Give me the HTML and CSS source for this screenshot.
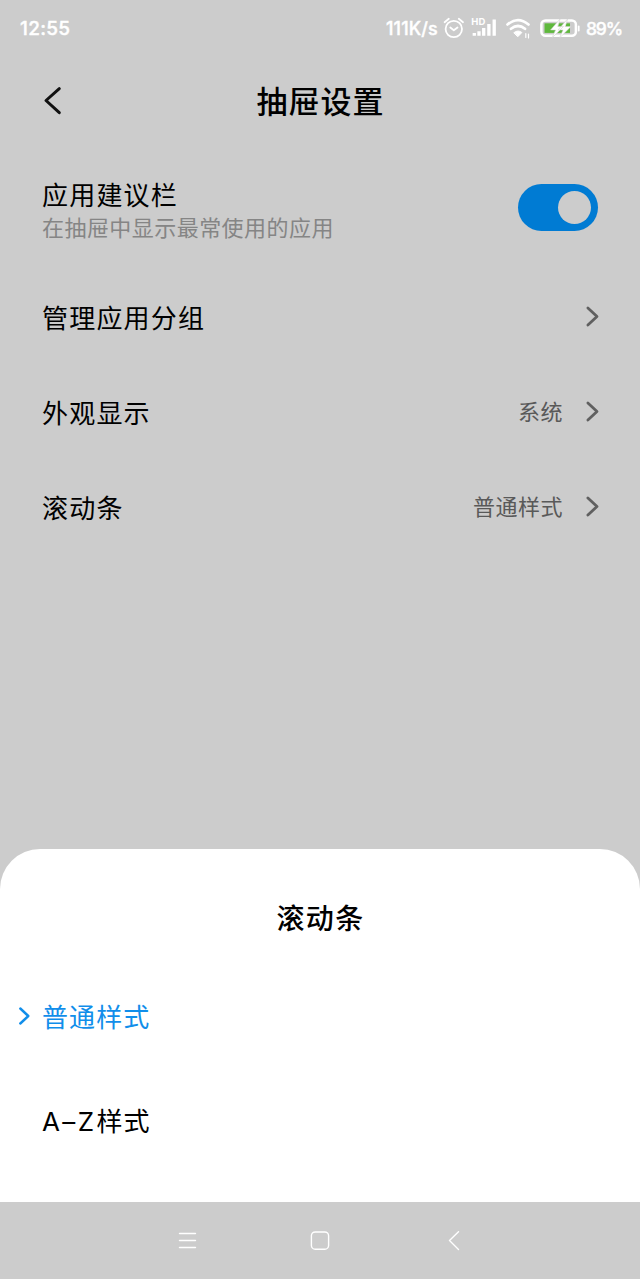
FILE: index.html
```html
<!DOCTYPE html>
<html lang="zh-CN">
<head>
<meta charset="utf-8">
<title>抽屉设置</title>
<link rel="stylesheet" href="styles.css">
</head>
<body>
<div class="screen">
  <div class="status">
    <span class="clock">12:55</span>
    <span class="speed">111K/s</span>
    <svg class="status-icons" width="140" height="30" viewBox="440 13 140 30" fill="none" stroke="#fff" stroke-linecap="round" stroke-linejoin="round">
      <circle cx="453.8" cy="29" r="8.2" stroke-width="1.8"/>
      <path d="M450.3 27.5l3.5 2.8 3.7-2.8M444.6 22.2l4.2-3.4M463 22.2l-4.2-3.4" stroke-width="1.8"/>
      <text class="hd" x="471.3" y="24.8">HD</text>
      <path d="M474.3 33v2.8M479 31.2v4.6M483.7 28v7.8M488.9 24v11.8M494.2 19.5v16.3" stroke-width="3.3" stroke-linecap="butt"/>
      <path d="M507.5 24.5q10.5-8.8 21 0M511 28.8q7-5.6 14 0" stroke-width="2.7"/>
      <path d="M514.1 32.5q3.9-3 7.8 0l-3.9 4z" fill="#fff" stroke-width="1"/>
      <path d="M525.8 33.5v4M528.5 34v4" stroke-width="1.2"/>
      <rect x="541.4" y="20.4" width="34.5" height="15.4" rx="4" stroke-width="2.5"/>
      <path d="M544.5 23.3h25.5v9.6h-25.5z" fill="#5eb83c" stroke="none"/>
      <path d="M560 19l-9.5 11h5l-3.5 8 11.5-11.5h-5.5zM567.5 19l-9.5 11h5l-3.5 8 11.5-11.5h-5.5z" fill="#fff" stroke="#ccc" stroke-width=".5"/>
      <path d="M578.7 26.5v4" stroke-width="1.8"/>
    </svg>
    <span class="percent">89%</span>
  </div>
  <header class="header">
    <svg class="back" width="24" height="34" viewBox="0 0 24 34"><path d="M17.3 4.7L4 16.5l13.3 12.2"/></svg>
    <h1 class="title">抽屉设置</h1>
  </header>
  <main class="settings">
    <div class="row row-tall">
      <div class="labels">
        <div class="label">应用建议栏</div>
        <div class="hint">在抽屉中显示最常使用的应用</div>
      </div>
      <div class="switch"><div class="knob"></div></div>
    </div>
    <div class="row">
      <div class="label">管理应用分组</div>
      <svg class="chevron" width="15" height="22" viewBox="0 0 15 22"><path d="M2.9 2L12 10.5l-9.1 8.5"/></svg>
    </div>
    <div class="row">
      <div class="label">外观显示</div>
      <div class="value">系统</div>
      <svg class="chevron" width="15" height="22" viewBox="0 0 15 22"><path d="M2.9 2L12 10.5l-9.1 8.5"/></svg>
    </div>
    <div class="row">
      <div class="label">滚动条</div>
      <div class="value">普通样式</div>
      <svg class="chevron" width="15" height="22" viewBox="0 0 15 22"><path d="M2.9 2L12 10.5l-9.1 8.5"/></svg>
    </div>
  </main>
  <section class="sheet">
    <h2 class="sheet-title">滚动条</h2>
    <div class="option selected">
      <svg class="mark" width="12" height="20" viewBox="0 0 12 20"><path d="M2.3 2.5L10.3 10l-8 7.5"/></svg>
      <span>普通样式</span>
    </div>
    <div class="option"><span><span class="latin">A–Z</span>样式</span></div>
  </section>
  <nav class="nav">
    <svg width="20" height="20" viewBox="0 0 20 20"><path d="M1.5 2.5h16M1.5 9.5h16M1.5 16.5h16"/></svg>
    <svg width="20" height="20" viewBox="0 0 20 20"><rect x="1.4" y="1" width="17.2" height="17.2" rx="3.8"/></svg>
    <svg width="20" height="20" viewBox="0 0 20 20"><path d="M14.5.7L5.5 9.500l9 9"/></svg>
  </nav>
</div>
</body>
</html>
```
FILE: styles.css
```css
body {
  margin: 0;
}

.screen {
  display: flex;
  flex-direction: column;
  width: 640px;
  height: 1279px;
  overflow: hidden;
  background: #ccc;
  color: #000;
  font-family: "Noto Sans CJK SC", sans-serif;
}

.status {
  display: flex;
  align-items: center;
  height: 56px;
  padding: 0 18px 0 20px;
  color: #fff;
  font: 500 19px/30px Inter, sans-serif;
  -webkit-text-stroke: .4px #fff;
}

.clock {
  flex: 1;
  padding-top: 2px;
  letter-spacing: .3px;
}

.speed {
  width: 54px;
  padding-top: 2px;
  font-size: 18px;
  letter-spacing: .1px;
  white-space: nowrap;
}

.hd {
  fill: #fff;
  stroke: none;
  font: 700 9.5px Inter, sans-serif;
}

.percent {
  width: 36px;
  margin-left: 6px;
  padding-top: 2px;
  font-size: 17.5px;
  letter-spacing: -1.2px;
  white-space: nowrap;
}

.header {
  display: grid;
  grid-template-columns: 24px 1fr 24px;
  align-items: center;
  height: 90px;
  padding: 0 42px;
}

.back path {
  fill: none;
  stroke: #111;
  stroke-width: 3;
  stroke-linecap: round;
  stroke-linejoin: round;
}

.title {
  margin: 0;
  padding: 0 0 3px 1px;
  font-size: 31px;
  font-weight: 500;
  line-height: 44px;
  letter-spacing: 1px;
  text-align: center;
}

.settings {
  flex: 1;
  padding: 0 40px 0 42px;
}

.row {
  display: flex;
  align-items: center;
  height: 95px;
}

.row-tall {
  height: 123px;
}

.labels,
.row > .label {
  flex: 1;
}

.label {
  font-size: 26px;
  line-height: 36px;
  letter-spacing: 1.2px;
}

.labels > .label {
  padding-top: 1px;
  line-height: 35px;
}

.hint {
  color: #858585;
  font-size: 22px;
  line-height: 30px;
  letter-spacing: .45px;
}

.value {
  margin-right: 22px;
  padding-bottom: 3px;
  color: #595959;
  font-size: 22px;
  line-height: 30px;
  letter-spacing: .5px;
}

.chevron path {
  fill: none;
  stroke: #606060;
  stroke-width: 2.8;
  stroke-linecap: round;
  stroke-linejoin: round;
}

.switch {
  box-sizing: border-box;
  display: flex;
  justify-content: flex-end;
  align-items: center;
  width: 80px;
  height: 47px;
  margin-right: 2px;
  padding-right: 7px;
  border-radius: 24px;
  background: #007bd3;
}

.knob {
  width: 33px;
  height: 33px;
  border-radius: 50%;
  background: #ccc;
}

.sheet {
  box-sizing: border-box;
  height: 353px;
  padding-top: 46px;
  border-radius: 40px 40px 0 0;
  background: #fff;
}

.sheet-title {
  margin: 0 0 25px;
  padding-left: 1px;
  font-size: 28px;
  font-weight: 500;
  line-height: 44px;
  letter-spacing: 1.4px;
  text-align: center;
}

.option {
  display: flex;
  align-items: center;
  height: 106px;
  padding-left: 42px;
  font-size: 26px;
  line-height: 36px;
  letter-spacing: 1.1px;
}

.option.selected {
  gap: 12px;
  height: 104px;
  padding-left: 18px;
  color: #118eea;
}

.mark path {
  fill: none;
  stroke: #118eea;
  stroke-width: 2.4;
  stroke-linecap: round;
  stroke-linejoin: round;
}

.latin {
  font-family: Inter, sans-serif;
  font-size: 26px;
  letter-spacing: 2.4px;
}

.nav {
  display: flex;
  justify-content: space-between;
  align-items: center;
  height: 77px;
  padding: 0 176px 0 178px;
}

.nav svg {
  fill: none;
  stroke: #fff;
  stroke-width: 1.4;
  stroke-linecap: round;
  stroke-linejoin: round;
}

.nav svg:nth-child(2) {
  margin-right: 3px;
}
```
